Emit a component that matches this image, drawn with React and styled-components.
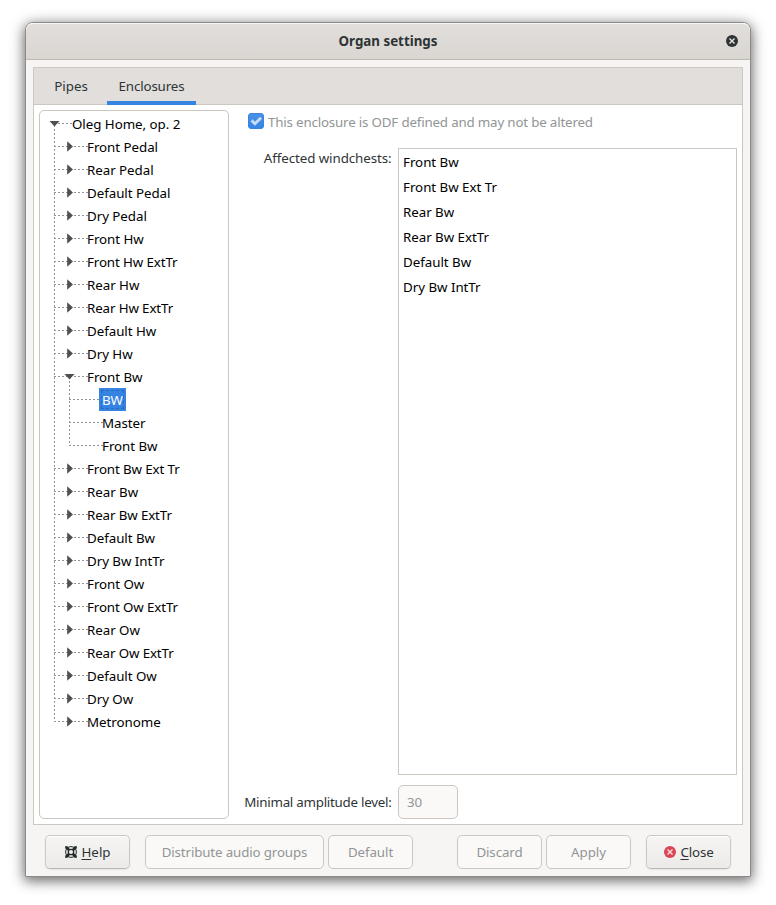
import React from "react";
import styled, { createGlobalStyle, css } from "styled-components";

const Global = createGlobalStyle`
  * { box-sizing: border-box; }
  body { margin: 0; background: #fff; overflow: hidden; }
  body, button, input { font: 13.333px/18px "Noto Sans", sans-serif; color: #2e3436; }
`;

const Desktop = styled.div`
  height: 905px;
  padding: 22px 25px 28px;
  background: #fff;
`;

const Window = styled.main`
  display: flex;
  flex-direction: column;
  width: 726px;
  height: 855px;
  border: 1px solid #8b8a89;
  border-radius: 8px 8px 0 0;
  background: #f6f5f4;
  box-shadow: 0 3px 12px 1px rgba(0, 0, 0, 0.5), 0 2px 20px rgba(0, 0, 0, 0.14);
`;

const TitleBar = styled.header`
  display: grid;
  grid-template-columns: 36px 1fr 36px;
  align-items: center;
  justify-items: center;
  height: 37px;
  flex: none;
  border-bottom: 1px solid #bfb8b1;
  border-radius: 7px 7px 0 0;
  background: linear-gradient(to top, #dad6d2, #e1dedb);
  box-shadow: inset 0 1px #f8f7f7;
`;

const Title = styled.h1`
  grid-column: 2;
  margin: 0;
  font-size: 13.333px;
  line-height: 18px;
  font-weight: 700;
`;

const Notebook = styled.section`
  display: flex;
  flex-direction: column;
  height: 758px;
  margin: 7px 7px 0;
  border: 1px solid #cdc7c2;
  background: #fff;
`;

const Tabs = styled.nav`
  display: flex;
  gap: 6px;
  height: 37px;
  flex: none;
  padding-left: 7px;
  border-bottom: 1px solid #cdc7c2;
  background: #e1dedb;
`;

const Tab = styled.button`
  height: 37px;
  width: ${(p) => p.$width}px;
  padding: 0 0 1px;
  border: 0;
  background: none;
  letter-spacing: ${(p) => p.$tracking || 0}px;
  ${(p) => p.$active && css`box-shadow: inset 0 -4px #3584e4;`}
`;

const Page = styled.div`
  display: grid;
  grid-template-columns: 190px 1fr;
  flex: 1;
  min-height: 0;
  padding: 5px;
`;

const Tree = styled.ul`
  margin: 0;
  padding: 1px 0 0;
  list-style: none;
  border: 1px solid #cdc7c2;
  border-radius: 5px;
  color: #000;
`;

const TreeRow = styled.li`
  display: flex;
  height: 23px;
  line-height: 25px;
  white-space: pre;
  letter-spacing: ${(p) => p.$tracking}px;
`;

const Gutter = styled.svg`
  display: block;
  flex: none;
  overflow: visible;
`;

const NodeLabel = styled.span`
  padding: 0 3px;
  ${(p) => p.$selected && css`
    color: #fff;
    background: #3584e4;
    outline: 1px dashed #2a6ab6;
    outline-offset: -3px;
  `}
`;

const Settings = styled.div`
  display: flex;
  flex-direction: column;
  padding-left: 10px;
`;

const CheckRow = styled.label`
  display: flex;
  gap: 4px;
  height: 38px;
  padding: 3px 0 0 9px;
  color: #929595;
`;

const CheckText = styled.span`
  line-height: 19px;
  letter-spacing: -0.175px;
`;

const Field = styled.div`
  display: grid;
  grid-template-columns: 152.5px ${(p) => p.$control};
  column-gap: 6.5px;
  height: ${(p) => p.$height}px;
  margin-bottom: ${(p) => p.$after || 0}px;
`;

const FieldLabel = styled.span`
  text-align: right;
  padding-top: ${(p) => p.$top}px;
  letter-spacing: ${(p) => p.$tracking}px;
  white-space: nowrap;
`;

const ListBox = styled.ul`
  margin: 0;
  padding: 1px 4px;
  list-style: none;
  border: 1px solid #cdc7c2;
  color: #000;
  letter-spacing: -0.03px;
`;

const ListItem = styled.li`
  height: 25px;
  line-height: 25px;
`;

const NumberInput = styled.input`
  width: 60px;
  height: 34px;
  padding: 0 8px 1px;
  border: 1px solid #cdc7c2;
  border-radius: 5px;
  background: #faf9f8;
  &:disabled { color: #929595; }
`;

const Footer = styled.footer`
  display: flex;
  align-items: flex-start;
  padding: 10px 19px 0;
`;

const Button = styled.button`
  display: flex;
  align-items: center;
  justify-content: center;
  gap: 4px;
  width: ${(p) => p.$width || 85}px;
  height: 34px;
  flex: none;
  margin-right: ${(p) => p.$after || 0}px;
  padding: 0;
  letter-spacing: ${(p) => p.$tracking || 0}px;
  border: 1px solid #cdc7c2;
  border-bottom-color: #bfb8b1;
  border-radius: 5px;
  background: linear-gradient(to top, #edebe9 2px, #f6f5f4);
  box-shadow: inset 0 1px #fff, 0 1px 2px rgba(0, 0, 0, 0.07);
  &:enabled { padding-left: 1px; }
  &:disabled {
    color: #929595;
    background: #faf9f8;
    border-color: #cdc7c2;
    box-shadow: none;
  }
  svg { flex: none; }
`;

const Mnemonic = styled.span`
  text-decoration: underline;
  text-underline-offset: 2px;
  text-decoration-thickness: 1px;
  text-decoration-skip-ink: none;
`;

const nodes = [
  "Front Pedal", "Rear Pedal", "Default Pedal", "Dry Pedal", "Front Hw",
  "Front Hw ExtTr", "Rear Hw", "Rear Hw ExtTr", "Default Hw", "Dry Hw",
  { name: "Front Bw", children: ["BW", "Master", "Front Bw"] },
  "Front Bw Ext Tr", "Rear Bw", "Rear Bw ExtTr", "Default Bw", "Dry Bw IntTr",
  "Front Ow", "Front Ow ExtTr", "Rear Ow", "Rear Ow ExtTr", "Default Ow",
  "Dry Ow", "Metronome",
];

const rows = [
  { name: "Oleg Home, op. 2", level: 0, open: true },
  ...nodes.flatMap((n, i) => {
    const last = i === nodes.length - 1;
    if (typeof n === "string") return [{ name: n, level: 1, last }];
    return [
      { name: n.name, level: 1, open: true, last },
      ...n.children.map((c, j) => ({ name: c, level: 2, last: j === n.children.length - 1 })),
    ];
  }),
];

const windchests = ["Front Bw", "Front Bw Ext Tr", "Rear Bw", "Rear Bw ExtTr", "Default Bw", "Dry Bw IntTr"];

function Branches({ row, index }) {
  const { level, open, last } = row;
  const width = [29, 44, 59][level];
  const start = [14, 14, 29][level];
  const arrow = level === 1 ? 29 : 14;
  const top = index * 23;
  const vertical = (x, y1, y2) => (
    <path d={`M${x + 0.5} ${y1}V${y2}`} strokeDashoffset={(top + y1 + 3) % 4} />
  );
  return (
    <Gutter width={width} height="23" viewBox={`0 0 ${width} 23`}>
      <g fill="none" stroke="#939393" strokeDasharray="2 2">
        <path d={`M${start} 11.5H${width + 4}`} />
        {level === 0 && vertical(14, 11, 23)}
        {level === 1 && vertical(14, 0, last ? 12 : 23)}
        {level === 1 && open && vertical(29, 11, 23)}
        {level === 2 && vertical(14, 0, 23)}
        {level === 2 && vertical(29, 0, last ? 12 : 23)}
      </g>
      {level < 2 && (open
        ? <path d={`M${arrow - 4.5} 9H${arrow + 5.5}L${arrow + 0.5} 14.5Z`} fill="#4f4f4f" />
        : <path d={`M${arrow - 1.8} 6.3V16.7L${arrow + 4} 11.5Z`} fill="#4f4f4f" />)}
    </Gutter>
  );
}

const CrossBadge = ({ fill, stroke }) => (
  <svg width="12" height="12" viewBox="0 0 12 12">
    <circle cx="6" cy="6" r="6" fill={fill} />
    <path d="M3.5 3.5L8.5 8.5M8.5 3.5L3.5 8.5" stroke={stroke} strokeWidth="1.4" />
  </svg>
);

const HelpIcon = () => (
  <svg width="12" height="12" viewBox="0 0 12 12" fill="none" stroke="#23292b">
    <circle cx="6" cy="6" r="5.4" strokeWidth="1" />
    <circle cx="6" cy="6" r="2.7" strokeWidth="1.3" />
    <path d="M1.2 1.2L4 4M10.8 1.2L8 4M1.2 10.8L4 8M10.8 10.8L8 8" strokeWidth="2.6" />
    <path d="M0.5 2.5V0.5H2.5M9.5 0.5H11.5V2.5M11.5 9.5V11.5H9.5M2.5 11.5H0.5V9.5" strokeWidth="0.8" />
  </svg>
);

const CheckIcon = () => (
  <svg width="16" height="16" viewBox="0 0 16 16">
    <defs>
      <linearGradient id="check" x1="0" y1="0" x2="0" y2="1">
        <stop stopColor="#4b92e7" /><stop offset="1" stopColor="#3584e4" />
      </linearGradient>
    </defs>
    <rect x=".5" y=".5" width="15" height="15" rx="2.5" fill="url(#check)" stroke="#3a84e0" />
    <path d="M3.6 7.4L7 10.8L13 4.8" fill="none" stroke="#c6dcf7" strokeWidth="2.9" />
  </svg>
);

export default function App() {
  return (
    <Desktop>
      <Global />
      <Window>
        <TitleBar>
          <Title>Organ settings</Title>
          <CrossBadge fill="#2e3436" stroke="#e6e3e0" />
        </TitleBar>
        <Notebook>
          <Tabs>
            <Tab $width={60}>Pipes</Tab>
            <Tab $width={89} $tracking={-0.15} $active>Enclosures</Tab>
          </Tabs>
          <Page>
            <Tree>
              {rows.map((row, i) => (
                <TreeRow key={i} $tracking={/Ext/.test(row.name) ? -0.12 : -0.04}>
                  <Branches row={row} index={i} />
                  <NodeLabel $selected={row.name === "BW"}>{row.name}</NodeLabel>
                </TreeRow>
              ))}
            </Tree>
            <Settings>
              <CheckRow>
                <CheckIcon />
                <CheckText>This enclosure is ODF defined and may not be altered</CheckText>
              </CheckRow>
              <Field $height={627} $after={10} $control="339px">
                <FieldLabel $top={1} $tracking={-0.08}>Affected windchests:</FieldLabel>
                <ListBox>
                  {windchests.map((w) => <ListItem key={w}>{w}</ListItem>)}
                </ListBox>
              </Field>
              <Field $height={34} $control="60px">
                <FieldLabel $top={8} $tracking={-0.25}>Minimal amplitude level:</FieldLabel>
                <NumberInput disabled defaultValue="30" />
              </Field>
            </Settings>
          </Page>
        </Notebook>
        <Footer>
          <Button $after={15}><HelpIcon /><span><Mnemonic>H</Mnemonic>elp</span></Button>
          <Button $width={179} $after={4} $tracking={-0.14} disabled>Distribute audio groups</Button>
          <Button $after={44} $tracking={-0.08} disabled>Default</Button>
          <Button $after={4} $tracking={-0.1} disabled>Discard</Button>
          <Button $after={15} disabled>Apply</Button>
          <Button $tracking={-0.15}><CrossBadge fill="#da4453" stroke="#f6dfe1" /><span><Mnemonic>C</Mnemonic>lose</span></Button>
        </Footer>
      </Window>
    </Desktop>
  );
}
